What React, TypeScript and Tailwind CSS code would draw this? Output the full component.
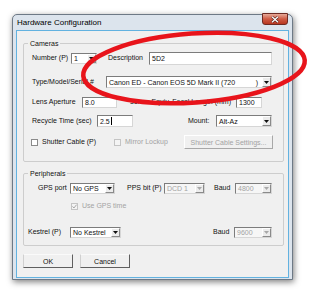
import type { ReactNode } from "react";

const sunken =
  "border border-t-[#7c7c7c] border-l-[#7c7c7c] border-r-[#d6d6d6] border-b-[#d6d6d6]";

function Arrow({ disabled }: { disabled?: boolean }) {
  return (
    <span className="flex h-full w-[9px] shrink-0 items-center justify-center border border-t-white border-l-white border-r-[#8a8a8a] border-b-[#8a8a8a] bg-[#ececec]">
      <svg width="5" height="3" viewBox="0 0 5 3">
        <path d="M0 0h5L2.5 3z" fill={disabled ? "#a8a8a8" : "#111"} />
      </svg>
    </span>
  );
}

function Combo({
  value,
  className,
  disabled,
  suffix,
}: {
  value: string;
  className: string;
  disabled?: boolean;
  suffix?: string;
}) {
  return (
    <div
      className={`flex shrink-0 items-stretch ${sunken} ${
        disabled ? "bg-[#f6f6f6] text-[#a3a3a3]" : "bg-white text-[#111]"
      } ${className}`}
    >
      <span className="flex flex-1 items-center overflow-hidden whitespace-nowrap pl-[2px] leading-none">
        {value}
      </span>
      {suffix && <span className="flex items-center pr-[4px] leading-none">{suffix}</span>}
      <Arrow disabled={disabled} />
    </div>
  );
}

function TextBox({ value, className, caret }: { value: string; className: string; caret?: boolean }) {
  return (
    <div className={`flex shrink-0 items-center bg-white pl-[2px] leading-none text-[#111] ${sunken} ${className}`}>
      {value}
      {caret && <span className="ml-[1px] h-[8px] w-px bg-black" />}
    </div>
  );
}

function Check({ disabled, checked }: { disabled?: boolean; checked?: boolean }) {
  return (
    <span
      className={`flex h-[7px] w-[7px] shrink-0 items-center justify-center border ${
        disabled ? "border-[#c4c4c4] bg-[#f4f4f4]" : "border-[#8a8a8a] bg-white"
      }`}
    >
      {checked && (
        <svg width="5" height="5" viewBox="0 0 5 5">
          <path d="M0.5 2.4l1.4 1.6L4.6 0.7" stroke="#a6a6a6" strokeWidth="1" fill="none" />
        </svg>
      )}
    </span>
  );
}

function Btn({ children, className, disabled }: { children: ReactNode; className: string; disabled?: boolean }) {
  return (
    <div
      className={`flex shrink-0 items-center justify-center border bg-[#f0f0f0] leading-none ${
        disabled
          ? "border-t-white border-l-white border-r-[#a8a8a8] border-b-[#a8a8a8] text-[#a3a3a3]"
          : "border-t-[#fafafa] border-l-[#d0d0d0] border-r-[#5f5f5f] border-b-[#5f5f5f] text-[#111]"
      } ${className}`}
    >
      {children}
    </div>
  );
}

export default function App() {
  return (
    <div className="relative h-[298px] w-[310px] overflow-hidden bg-white font-['Liberation_Sans',Arial,sans-serif] text-[7px] text-[#111]">
      <div className="ml-[12px] mt-[14px] flex h-[266px] w-[281px] flex-col rounded-t-[5px] border border-[#6d7986] bg-[#dce4ed] shadow-[1px_2px_6px_rgba(0,0,0,0.5)]">
        {/* title bar */}
        <div className="flex h-[15px] items-center justify-between pl-[4px] pr-[4px]">
          <span className="text-[8px] leading-none text-black">Hardware Configuration</span>
          <div className="-mt-[2px] flex h-[12px] w-[26px] items-center justify-center self-start rounded-b-[3px] border border-[#6e2a22] bg-gradient-to-b from-[#e4a898] via-[#cf5a44] to-[#b8361f]">
            <svg width="8" height="7" viewBox="0 0 8 7">
              <path d="M1 0.8l6 5.4M7 0.8l-6 5.4" stroke="#4a1a14" strokeWidth="2.4" />
              <path d="M1 0.8l6 5.4M7 0.8l-6 5.4" stroke="#fff" strokeWidth="1.3" />
            </svg>
          </div>
        </div>

        {/* client area */}
        <div className="mx-[3px] mb-[1px] flex flex-1 flex-col border border-[#62b2e0] bg-[#f0f0f0] pl-[6px]">
          <fieldset className="mt-[8px] w-[261px] rounded-[2px] border border-[#cdcdcd] pb-[12px]">
            <legend className="ml-[4px] px-[2px] leading-[9px]">Cameras</legend>

            <div className="mt-[4px] flex h-[13px] items-center pl-[8px]">
              <span className="w-[39px]">Number (P)</span>
              <Combo value="1" className="h-[11px] w-[26px]" />
              <span className="ml-[11px] w-[41px]">Description</span>
              <TextBox value="5D2" className="h-[13px] w-[123px]" />
            </div>

            <div className="mt-[11px] flex h-[12px] items-center pl-[8px]">
              <span className="w-[74px] whitespace-nowrap">Type/Model/Serial #</span>
              <Combo value="Canon ED - Canon EOS 5D Mark II (720" suffix=")" className="h-[12px] w-[166px]" />
            </div>

            <div className="mt-[9px] flex h-[11px] items-center pl-[8px]">
              <span className="w-[50px]">Lens Aperture</span>
              <TextBox value="8.0" className="h-[11px] w-[35px]" />
              <span className="ml-[13px] w-[106px] whitespace-nowrap">35mm Equiv. Focal Length (mm)</span>
              <TextBox value="1300" className="h-[11px] w-[26px]" />
            </div>

            <div className="mt-[7px] flex h-[12px] items-center pl-[8px]">
              <span className="w-[65px] whitespace-nowrap">Recycle Time (sec)</span>
              <TextBox value="2.5" caret className="h-[12px] w-[36px]" />
              <span className="ml-[55px] w-[28px]">Mount:</span>
              <Combo value="Alt-Az" className="h-[12px] w-[56px]" />
            </div>

            <div className="mt-[8px] flex h-[14px] items-center pl-[7px]">
              <div className="flex w-[83px] items-center gap-[4px]">
                <Check />
                <span className="whitespace-nowrap">Shutter Cable (P)</span>
              </div>
              <div className="flex w-[70px] items-center gap-[4px]">
                <Check disabled />
                <span className="whitespace-nowrap text-[#a3a3a3]">Mirror Lockup</span>
              </div>
              <Btn disabled className="h-[14px] w-[89px]">
                Shutter Cable Settings...
              </Btn>
            </div>
          </fieldset>

          <fieldset className="mt-[7px] w-[261px] rounded-[2px] border border-[#cdcdcd] pb-[7px]">
            <legend className="ml-[4px] px-[2px] leading-[9px]">Peripherals</legend>

            <div className="mt-[5px] flex h-[11px] items-center pl-[14px]">
              <span className="w-[32px] whitespace-nowrap">GPS port</span>
              <Combo value="No GPS" className="h-[11px] w-[45px]" />
              <span className="ml-[12px] w-[37px] whitespace-nowrap">PPS bit (P)</span>
              <Combo value="DCD 1" disabled className="h-[11px] w-[41px]" />
              <span className="ml-[9px] w-[21px]">Baud</span>
              <Combo value="4800" disabled className="h-[11px] w-[37px]" />
            </div>

            <div className="mt-[7px] flex h-[10px] items-center gap-[4px] pl-[47px]">
              <Check disabled checked />
              <span className="text-[#a3a3a3]">Use GPS time</span>
            </div>

            <div className="mt-[16px] flex h-[11px] items-center pl-[4px]">
              <span className="w-[42px] whitespace-nowrap">Kestrel (P)</span>
              <Combo value="No Kestrel" className="h-[11px] w-[51px]" />
              <span className="ml-[92px] w-[21px]">Baud</span>
              <Combo value="9600" disabled className="h-[11px] w-[38px]" />
            </div>
          </fieldset>

          <div className="mt-[8px] flex gap-[7px]">
            <Btn className="h-[14px] w-[50px]">OK</Btn>
            <Btn className="h-[14px] w-[50px]">Cancel</Btn>
          </div>
        </div>
      </div>

      {/* red highlight drawn over the dialog */}
      <svg className="pointer-events-none absolute left-0 top-0" width="310" height="298" viewBox="0 0 310 298">
        <ellipse
          cx="194"
          cy="68"
          rx="111"
          ry="34.5"
          transform="rotate(-4 194 68)"
          fill="none"
          stroke="#e8141b"
          strokeWidth="4.5"
        />
      </svg>
    </div>
  );
}
